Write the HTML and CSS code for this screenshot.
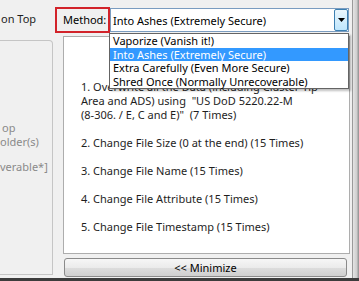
FILE: index.html
```html
<!DOCTYPE html>
<html>
<head>
<meta charset="utf-8">
<link rel="stylesheet" href="styles.css">
</head>
<body>
<div class="frame">
  <div class="left">
    <div class="ontop">on Top</div>
    <div class="group">
      <div class="g1">op</div>
      <div class="g2">older(s)</div>
      <div class="g3">verable*]</div>
    </div>
  </div>
  <div class="main">
    <div class="row">
      <div class="method">Method:</div>
      <div class="combo">
        <span class="combo-text">Into Ashes (Extremely Secure)</span>
        <span class="combo-btn"><svg width="7" height="4" viewBox="0 0 7 4"><path d="M0 0H7L3.5 4Z" fill="#000"/></svg></span>
      </div>
    </div>
    <div class="textarea">
      <p>1. Overwrite all the Data (including Cluster Tip<br>Area and ADS) using&nbsp; "US DoD 5220.22-M<br>(8-306. / E, C and E)"&nbsp; (7 Times)</p>
      <p>2. Change File Size (0 at the end) (15 Times)</p>
      <p>3. Change File Name (15 Times)</p>
      <p>4. Change File Attribute (15 Times)</p>
      <p>5. Change File Timestamp (15 Times)</p>
    </div>
    <div class="btn">&lt;&lt; Minimize</div>
  </div>
  <div class="edge"></div>
</div>
<ul class="list">
  <li>Vaporize (Vanish it!)</li>
  <li class="sel">Into Ashes (Extremely Secure)</li>
  <li>Extra Carefully (Even More Secure)</li>
  <li>Shred Once (Normally Unrecoverable)</li>
</ul>
</body>
</html>
```

FILE: styles.css
```css
html, body {
  margin: 0;
  padding: 0;
}
body {
  width: 359px;
  height: 281px;
  overflow: hidden;
  background: #f0f0f0;
  font-family: "Noto Sans", "Open Sans", sans-serif;
  font-size: 11px;
  color: #1e1e1e;
  position: relative;
}
.frame {
  display: flex;
  height: 278px;
  border-bottom: 3px solid #3c3c3c;
}
.left {
  width: 53px;
  display: flex;
  flex-direction: column;
}
.ontop {
  height: 40px;
  line-height: 14px;
  padding-top: 12px;
  box-sizing: border-box;
  padding-left: 1px;
  white-space: nowrap;
}
.group {
  flex: 1;
  margin-bottom: 3px;
  border: 1px solid #c5c5c5;
  border-left: none;
  border-top-right-radius: 4px;
  color: #8a8a8a;
  white-space: nowrap;
  overflow: hidden;
  line-height: 14px;
}
.g1 { margin-top: 80px; padding-left: 2px; }
.g2 { padding-left: 0; }
.g3 { margin-top: 11px; padding-left: 0; }
.main {
  width: 299px;
  display: flex;
  flex-direction: column;
}
.row {
  display: flex;
  height: 36px;
  padding-top: 7px;
  padding-left: 2px;
  box-sizing: border-box;
}
.method {
  width: 55px;
  height: 26px;
  box-sizing: border-box;
  border: 2px solid #d2232a;
  padding-left: 6px;
  line-height: 22px;
  color: #000;
}
.combo {
  width: 239px;
  height: 24px;
  margin-top: 1px;
  box-sizing: border-box;
  border: 1px solid #7a9cc0;
  background: #fff;
  display: flex;
  align-items: center;
  justify-content: space-between;
  color: #000;
}
.combo-text {
  padding-left: 2px;
  white-space: nowrap;
}
.combo-btn {
  width: 14px;
  height: 22px;
  box-sizing: border-box;
  border: 1px solid #3c7fb1;
  border-radius: 2px;
  background: linear-gradient(#eaf6fd, #bee6fd);
  display: flex;
  align-items: center;
  justify-content: center;
}
.textarea {
  flex: 1;
  margin-left: 10px;
  width: 287px;
  box-sizing: border-box;
  background: #fff;
  border: 1px solid #adadad;
  padding: 43px 0 0 17px;
  line-height: 14px;
  white-space: nowrap;
  overflow: hidden;
}
.textarea p {
  margin: 0 0 14px 0;
}
.btn {
  margin: 4px 0 1px 11px;
  width: 283px;
  height: 19px;
  box-sizing: border-box;
  border: 1px solid #8a8a8a;
  border-radius: 3px;
  background: linear-gradient(#f6f6f6 0%, #ebebeb 50%, #dddddd 51%, #cfcfcf 100%);
  text-align: center;
  line-height: 17px;
  color: #000;
}
.edge {
  flex: 1;
  border-left: 1px solid #9a9a9a;
  background: linear-gradient(90deg, #e4e4e4, #cfcfcf 60%, #8c8c8c);
}
.list {
  position: absolute;
  left: 109px;
  top: 33px;
  width: 240px;
  margin: 0;
  padding: 0;
  list-style: none;
  box-sizing: border-box;
  border: 1px solid #646464;
  background: #fff;
  box-shadow: 2px 2px 2px rgba(0,0,0,0.25);
  color: #000;
}
.list li {
  height: 13.5px;
  line-height: 13px;
  padding-left: 3px;
  white-space: nowrap;
}
.list li.sel {
  background: #3399ff;
  color: #fff;
}
```
